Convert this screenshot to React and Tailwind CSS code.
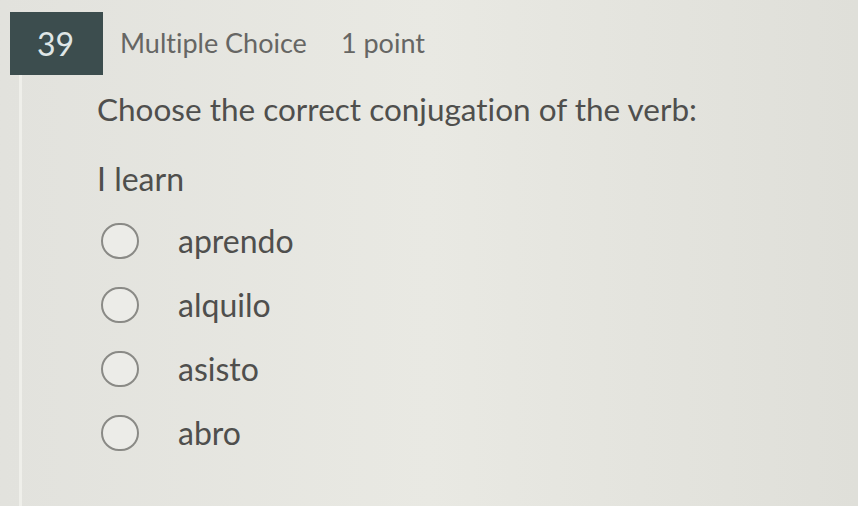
import React from 'react';

const options = ['aprendo', 'alquilo', 'asisto', 'abro'];

const Radio = () => (
  <span className="block w-[38px] h-[36px] rounded-full border-2 border-[#8a8a86] bg-[#ecece8] shrink-0"></span>
);

export default function App() {
  return (
    <div
      className="w-[858px] h-[506px] overflow-hidden bg-gradient-to-r from-[#e2e2dd] via-[#e9e9e3] to-[#dfdfd9] text-[#4f4f4d] [font-variant-ligatures:none]"
      style={{ fontFamily: 'Lato, "Open Sans", sans-serif' }}
    >
      {/* Header row */}
      <div className="flex items-center pt-[12px] pl-[10px]">
        <div className="w-[93px] h-[63px] bg-[#3c4d4e] flex items-center pl-[27px] text-[32px] text-[#dfe6e6]">
          39
        </div>
        <div className="flex items-center pl-[17px] text-[27px] text-[#666664]">
          <span>Multiple Choice</span>
          <span className="ml-[34px]">1 point</span>
        </div>
      </div>

      {/* Question body */}
      <div className="ml-[19px] border-l-[3px] border-[#efefea] h-full">
        <div className="pl-[75px] pt-[12px]">
          <p className="text-[31.5px] leading-[44px]">Choose the correct conjugation of the verb:</p>
          <p className="text-[32px] leading-[44px] mt-[26px]">I learn</p>

          <div className="mt-[20px] flex flex-col gap-[24px]">
            {options.map((opt) => (
              <label key={opt} className="flex items-center gap-[39px] pl-[4px] h-[40px]">
                <Radio />
                <span className="text-[32px]">{opt}</span>
              </label>
            ))}
          </div>
        </div>
      </div>
    </div>
  );
}
